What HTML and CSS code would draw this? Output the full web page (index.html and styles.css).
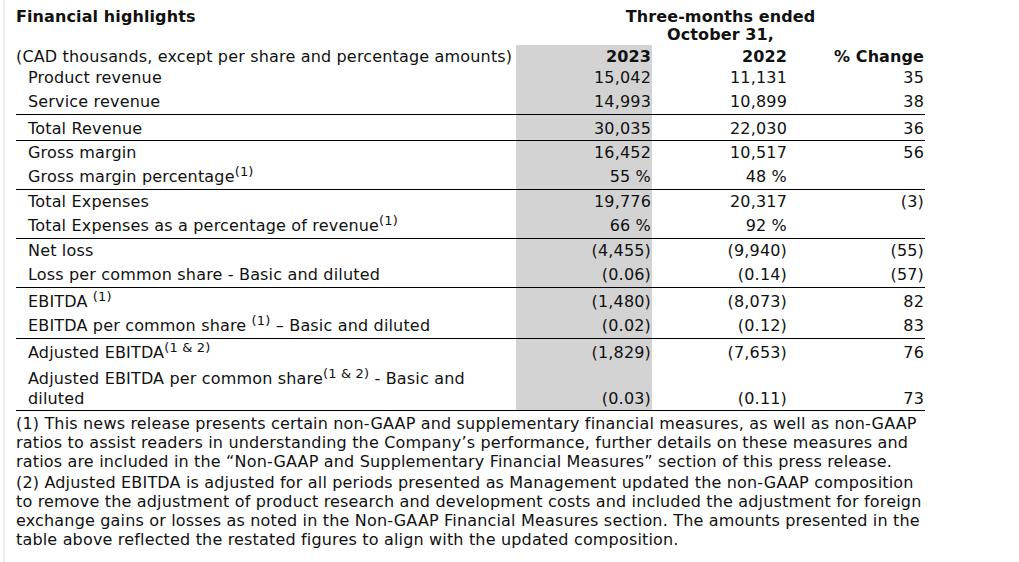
FILE: index.html
```html
<!DOCTYPE html>
<html lang="en">
<head>
<meta charset="utf-8">
<title>Financial highlights</title>
<link rel="stylesheet" href="styles.css">
</head>
<body>
<div class="frame">
  <table class="fin">
    <colgroup>
      <col class="c-label">
      <col class="c-num">
      <col class="c-num">
      <col class="c-chg">
    </colgroup>
    <thead>
      <tr class="top">
        <th class="title">Financial highlights</th>
        <th class="period" colspan="3">Three-months ended<br>October 31,</th>
      </tr>
      <tr class="head">
        <th class="units">(CAD thousands, except per share and percentage amounts)</th>
        <th class="num cur">2023</th>
        <th class="num">2022</th>
        <th class="num">% Change</th>
      </tr>
    </thead>
    <tbody>
      <tr>
        <td class="lbl">Product revenue</td>
        <td class="num cur">15,042</td>
        <td class="num">11,131</td>
        <td class="num">35</td>
      </tr>
      <tr>
        <td class="lbl">Service revenue</td>
        <td class="num cur">14,993</td>
        <td class="num">10,899</td>
        <td class="num">38</td>
      </tr>
      <tr class="sep low">
        <td class="lbl">Total Revenue</td>
        <td class="num cur">30,035</td>
        <td class="num">22,030</td>
        <td class="num">36</td>
      </tr>
      <tr class="sep">
        <td class="lbl">Gross margin</td>
        <td class="num cur">16,452</td>
        <td class="num">10,517</td>
        <td class="num">56</td>
      </tr>
      <tr>
        <td class="lbl">Gross margin percentage<sup>(1)</sup></td>
        <td class="num cur">55 %</td>
        <td class="num">48 %</td>
        <td class="num"></td>
      </tr>
      <tr class="sep">
        <td class="lbl">Total Expenses</td>
        <td class="num cur">19,776</td>
        <td class="num">20,317</td>
        <td class="num">(3)</td>
      </tr>
      <tr>
        <td class="lbl">Total Expenses as a percentage of revenue<sup>(1)</sup></td>
        <td class="num cur">66 %</td>
        <td class="num">92 %</td>
        <td class="num"></td>
      </tr>
      <tr class="sep">
        <td class="lbl">Net loss</td>
        <td class="num cur">(4,455)</td>
        <td class="num">(9,940)</td>
        <td class="num">(55)</td>
      </tr>
      <tr>
        <td class="lbl">Loss per common share - Basic and diluted</td>
        <td class="num cur">(0.06)</td>
        <td class="num">(0.14)</td>
        <td class="num">(57)</td>
      </tr>
      <tr class="sep tall">
        <td class="lbl">EBITDA <sup>(1)</sup></td>
        <td class="num cur">(1,480)</td>
        <td class="num">(8,073)</td>
        <td class="num">82</td>
      </tr>
      <tr>
        <td class="lbl">EBITDA per common share <sup>(1)</sup> – Basic and diluted</td>
        <td class="num cur">(0.02)</td>
        <td class="num">(0.12)</td>
        <td class="num">83</td>
      </tr>
      <tr class="sep tall">
        <td class="lbl">Adjusted EBITDA<sup>(1 &amp; 2)</sup></td>
        <td class="num cur">(1,829)</td>
        <td class="num">(7,653)</td>
        <td class="num">76</td>
      </tr>
      <tr class="low">
        <td class="lbl">Adjusted EBITDA per common share<sup>(1 &amp; 2)</sup> - Basic and diluted</td>
        <td class="num cur">(0.03)</td>
        <td class="num">(0.11)</td>
        <td class="num">73</td>
      </tr>
      <tr class="sep notes">
        <td colspan="4">
          <p class="note">(1) This news release presents certain non-GAAP and supplementary financial measures, as well as non-GAAP ratios to assist readers in understanding the Company’s performance, further details on these measures and ratios are included in the “Non-GAAP and Supplementary Financial Measures” section of this press release.</p>
          <p class="note">(2) Adjusted EBITDA is adjusted for all periods presented as Management updated the non-GAAP composition to remove the adjustment of product research and development costs and included the adjustment for foreign exchange gains or losses as noted in the Non-GAAP Financial Measures section. The amounts presented in the table above reflected the restated figures to align with the updated composition.</p>
        </td>
      </tr>
    </tbody>
  </table>
</div>
</body>
</html>
```

FILE: styles.css
```css
html, body {
  margin: 0;
  padding: 0;
  background: #ffffff;
}

body {
  font-family: "DejaVu Sans", Verdana, sans-serif;
  font-size: 16px;
  letter-spacing: 0.17px;
  color: #111111;
}

.frame {
  margin-left: 3px;
  border-left: 2px solid #ececec;
  padding: 8px 0 0 11px;
  min-height: 554px;
}

.fin {
  border-collapse: collapse;
  width: 909px;
  table-layout: fixed;
}

.c-label { width: 500px; }
.c-num { width: 136px; }
.c-chg { width: 137px; }

.fin th,
.fin td {
  padding: 0;
  line-height: 20px;
  vertical-align: bottom;
}

.fin th {
  font-weight: bold;
  letter-spacing: 0.1px;
}

.top th {
  line-height: 18px;
  height: 37px;
  vertical-align: top;
}

.title {
  text-align: left;
}

.period {
  text-align: center;
}

.head th {
  height: 19px;
  line-height: 19px;
  padding-top: 2px;
}

.units {
  text-align: left;
  font-weight: normal !important;
  letter-spacing: 0.17px !important;
}

.fin tbody td {
  padding-top: 2px;
  padding-bottom: 2px;
}

.fin tbody .low td {
  padding-top: 4px;
  padding-bottom: 1px;
}

.fin tbody .tall td {
  padding-top: 4px;
  padding-bottom: 2px;
}

.lbl {
  padding-left: 12px !important;
}

.num {
  text-align: right;
  padding-right: 1px !important;
}

.cur {
  background: #d3d3d3;
}

.sep td {
  border-top: 1px solid #000000;
}

sup {
  font-size: 13px;
  line-height: 0;
  vertical-align: baseline;
  position: relative;
  top: -0.45em;
}

.fin tbody .notes td {
  padding: 3px 0 0 0;
}

.note {
  margin: 0;
  line-height: 19px;
}

.note + .note {
  margin-top: 2px;
}
```
